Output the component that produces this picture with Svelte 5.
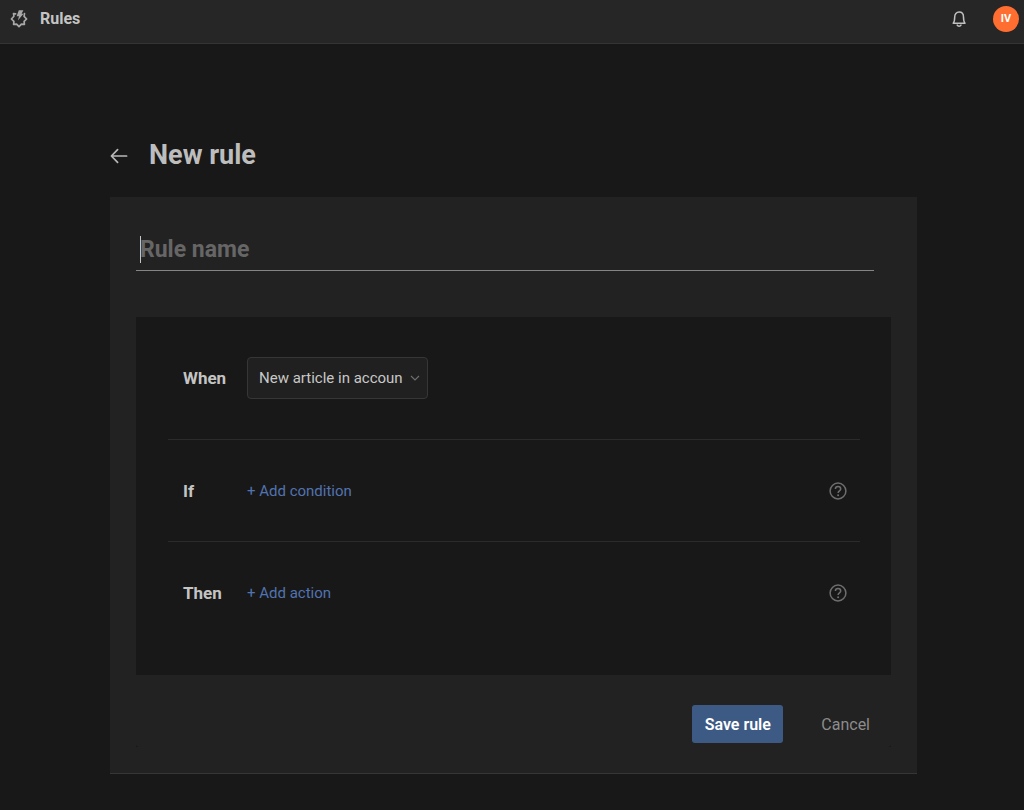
<script lang="ts">
	let name = '';
	let trigger = 'account';

	const triggers = [{ value: 'account', label: 'New article in accoun' }];

	const steps = [
		{ title: 'If', action: '+ Add condition', help: 'About conditions' },
		{ title: 'Then', action: '+ Add action', help: 'About actions' }
	];
</script>

<header class="topbar">
	<svg class="logo" viewBox="0 0 18 18" width="18" height="18" aria-hidden="true">
		<path
			d="M5.6 3.9 3.5 3.5 3.9 6.2 1.4 9 3.9 11.4 3.6 14.4 6.6 14.1 9 16.6 11.4 14.1 14.4 14.4 14.1 11.4 16.6 9 14.1 6.4 14.5 3.5"
			fill="none"
			stroke="currentColor"
			stroke-width="1.7"
			stroke-linejoin="round"
			stroke-linecap="round"
		/>
		<path d="M8.8.2h4.6L11.6 3.8h1.9L7.9 10.6l1.1-4.4H6.6z" fill="currentColor" />
	</svg>
	<span class="section">Rules</span>
	<button class="bell" aria-label="Notifications">
		<svg viewBox="0 0 16 18" width="16" height="18" aria-hidden="true">
			<path
				d="M2.2 13.2C3.4 11.9 3.7 10 3.7 7c0-2.9 1.7-4.9 4.4-4.9s4.4 2 4.4 4.9c0 3 .3 4.9 1.5 6.2zM6.2 15.1c.8 1.4 3 1.4 3.8 0"
				fill="none"
				stroke="currentColor"
				stroke-width="1.5"
				stroke-linecap="round"
				stroke-linejoin="round"
			/>
		</svg>
	</button>
	<button class="avatar">IV</button>
</header>

<main>
	<div class="heading">
		<a class="back" href="#rules" aria-label="Back">
			<svg viewBox="0 0 18 16" width="18" height="16" aria-hidden="true">
				<path
					d="M16.6 8H1.6M7.6 1.6 1.4 8l6.2 6.4"
					fill="none"
					stroke="currentColor"
					stroke-width="1.7"
					stroke-linecap="round"
					stroke-linejoin="round"
				/>
			</svg>
		</a>
		<h1>New rule</h1>
	</div>

	<form class="card" on:submit|preventDefault>
		<div class="name" class:empty={!name}>
			<input type="text" placeholder="Rule name" aria-label="Rule name" bind:value={name} />
		</div>

		<div class="builder">
			<div class="steps">
				<div class="step">
					<label class="title" for="trigger">When</label>
					<div class="picker">
						<select id="trigger" bind:value={trigger}>
							{#each triggers as t}
								<option value={t.value}>{t.label}</option>
							{/each}
						</select>
						<svg class="chevron" viewBox="0 0 10 6" width="10" height="6" aria-hidden="true">
							<path d="M1 1l4 4 4-4" fill="none" stroke="currentColor" stroke-width="1.1" />
						</svg>
					</div>
				</div>

				{#each steps as step}
					<div class="step">
						<span class="title">{step.title}</span>
						<button type="button" class="add">{step.action}</button>
						<button type="button" class="help" aria-label={step.help}>
							<svg viewBox="0 0 18 18" width="18" height="18" aria-hidden="true">
								<circle cx="9" cy="9" r="7.9" fill="none" stroke="currentColor" stroke-width="1.5" />
								<path
									d="M6.4 7.1c0-3.4 5.3-3.3 5.3-.1 0 1.9-2.6 1.8-2.6 4.1"
									fill="none"
									stroke="currentColor"
									stroke-width="1.5"
								/>
								<circle cx="9.1" cy="13.3" r="1" fill="currentColor" />
							</svg>
						</button>
					</div>
				{/each}
			</div>

			<div class="actions">
				<button type="submit" class="save">Save rule</button>
				<button type="button" class="cancel">Cancel</button>
			</div>
		</div>
	</form>
</main>

<style>
	:global(body) {
		background: #181818;
		color: #c4c4c4;
		font-family: Roboto, 'Liberation Sans', sans-serif;
		font-size: 16px;
	}

	button,
	input,
	select {
		font: inherit;
		border: none;
		background: none;
		padding: 0;
		margin: 0;
		box-sizing: border-box;
	}

	button {
		cursor: pointer;
	}

	svg {
		display: block;
	}

	.topbar {
		display: flex;
		align-items: center;
		height: 37px;
		padding: 0 5px 6px 10px;
		background: #262626;
		border-bottom: 1px solid #343434;
	}

	.logo {
		color: #a8a8a8;
	}

	.section {
		margin-left: 12px;
		font-weight: 700;
	}

	.bell {
		margin-left: auto;
		color: #c0c0c0;
	}

	.avatar {
		width: 26px;
		height: 26px;
		margin-left: 26px;
		border-radius: 50%;
		background: #ff6e30;
		color: #fff;
		font-size: 11px;
		font-weight: 700;
	}

	main {
		margin: 0 107px 0 110px;
		padding: 93px 0 36px;
	}

	.heading {
		display: flex;
		align-items: center;
		gap: 21px;
		margin-bottom: 23px;
	}

	.back {
		color: #b8b8b8;
	}

	h1 {
		margin: 0;
		font-size: 27px;
		line-height: 37px;
		font-weight: 700;
		color: #bdbdbd;
	}

	.card {
		padding: 26px;
		background: #222;
		border-bottom: 1px solid #363636;
	}

	.name {
		position: relative;
		margin-right: 17px;
		margin-bottom: 46px;
	}

	.name input {
		display: block;
		width: 100%;
		height: 48px;
		padding: 6px 4px 0;
		border-bottom: 1px solid #858585;
		outline: none;
		color: #c4c4c4;
		font-size: 23px;
		font-weight: 700;
	}

	.name input::placeholder {
		color: #666;
		opacity: 1;
	}

	/* caret hint while the name is still blank */
	.name.empty::before {
		content: '';
		position: absolute;
		top: 13px;
		left: 4px;
		width: 1px;
		height: 27px;
		background: #c4c4c4;
	}

	.builder {
		background: #181818;
	}

	.steps {
		padding: 0 31px 31px 32px;
	}

	.step {
		display: flex;
		align-items: center;
		height: 101px;
		padding: 0 13px 0 15px;
		border-bottom: 1px solid #2b2b2b;
	}

	.step:first-child {
		height: 122px;
	}

	.step:last-child {
		height: 102px;
		border-bottom: none;
	}

	.title {
		width: 64px;
		font-size: 17px;
		font-weight: 700;
	}

	.picker {
		position: relative;
	}

	select {
		display: block;
		width: 181px;
		height: 42px;
		padding: 0 24px 0 11px;
		appearance: none;
		border: 1px solid #363636;
		border-radius: 4px;
		background: #202020;
		color: #c8c8c8;
		font-size: 15px;
	}

	.chevron {
		position: absolute;
		top: 18px;
		right: 8px;
		color: #707070;
		pointer-events: none;
	}

	.add {
		color: #5273b0;
		font-size: 15px;
	}

	.help {
		margin-left: auto;
		color: #6e6e6e;
	}

	.actions {
		display: flex;
		justify-content: flex-end;
		align-items: center;
		gap: 38px;
		height: 72px;
		padding: 26px 21px 0 0;
		box-sizing: border-box;
		background: #222;
		border-radius: 0 0 3px 3px;
	}

	.save {
		width: 91px;
		height: 38px;
		border-radius: 3px;
		background: #3d5a85;
		color: #fff;
		font-weight: 600;
	}

	.cancel {
		color: #8c8c8c;
	}
</style>
